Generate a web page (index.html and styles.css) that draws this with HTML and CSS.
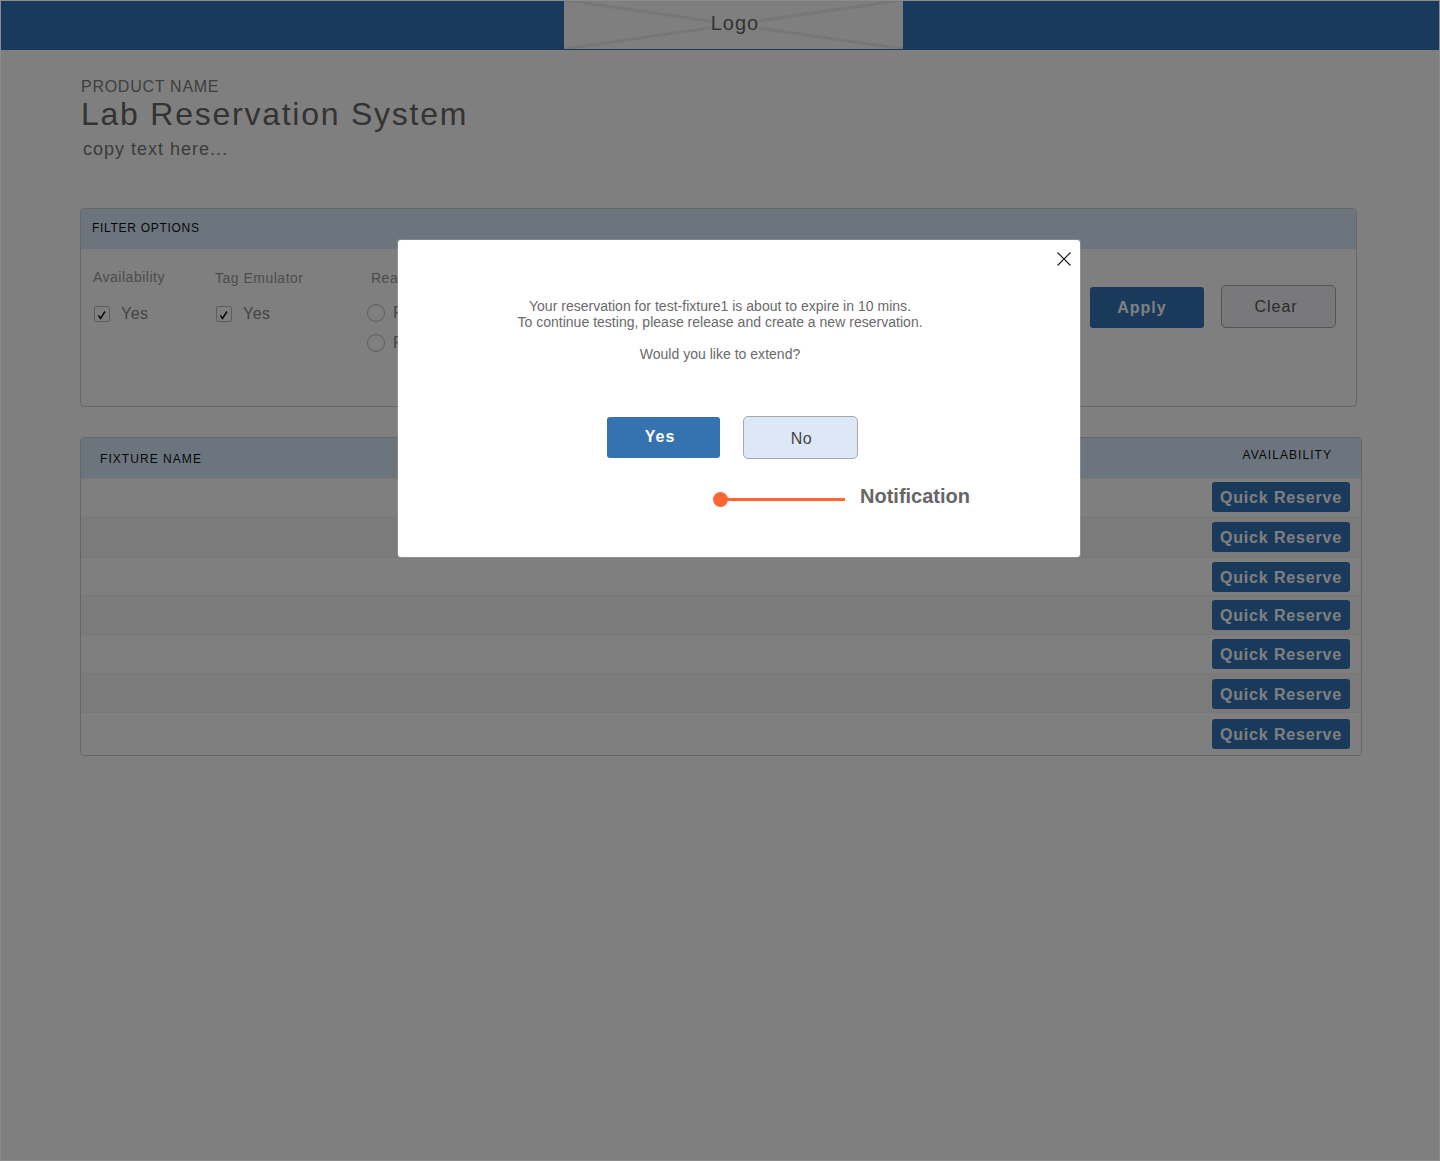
FILE: index.html
```html
<!DOCTYPE html>
<html lang="en">
<head>
<meta charset="utf-8">
<title>Lab Reservation System</title>
<link rel="stylesheet" href="styles.css">
</head>
<body>
<div class="page">
  <header class="topbar">
    <div class="logo">
      <svg class="logo-x" viewBox="0 0 339 49" preserveAspectRatio="none" aria-hidden="true">
        <path d="M0 0 L339 49 M339 0 L0 49" fill="none" stroke="#eee" stroke-width="3"/>
      </svg>
      <span class="logo-text">Logo</span>
    </div>
  </header>

  <section class="hero">
    <div class="hero-product">PRODUCT NAME</div>
    <h1 class="hero-title">Lab Reservation System</h1>
    <p class="hero-copy">copy text here...</p>
  </section>

  <section class="filter">
    <div class="filter-head">FILTER OPTIONS</div>
    <div class="filter-body">
      <div class="filter-col filter-col-a">
        <div class="filter-label">Availability</div>
        <label class="check"><span class="check-box"><svg viewBox="0 0 14 14" aria-hidden="true"><path d="M3.3 8.3 L5.5 11.5 L10 4.5" fill="none" stroke="#111" stroke-width="1.5"/></svg></span>Yes</label>
      </div>
      <div class="filter-col filter-col-b">
        <div class="filter-label filter-label-low">Tag Emulator</div>
        <label class="check"><span class="check-box"><svg viewBox="0 0 14 14" aria-hidden="true"><path d="M3.3 8.3 L5.5 11.5 L10 4.5" fill="none" stroke="#111" stroke-width="1.5"/></svg></span>Yes</label>
      </div>
      <div class="filter-col filter-col-c">
        <div class="filter-label filter-label-low filter-label-in">Rea</div>
        <div class="radio radio-first"><span class="radio-dot"></span>F</div>
        <div class="radio"><span class="radio-dot"></span>F</div>
      </div>
      <div class="filter-actions">
        <button class="btn btn-apply">Apply</button>
        <button class="btn btn-clear">Clear</button>
      </div>
    </div>
  </section>

  <section class="table">
    <div class="table-head">
      <span class="table-name">FIXTURE NAME</span>
      <span class="table-avail">AVAILABILITY</span>
    </div>
    <div class="row"><button class="quick">Quick Reserve</button></div>
    <div class="row"><button class="quick">Quick Reserve</button></div>
    <div class="row"><button class="quick">Quick Reserve</button></div>
    <div class="row"><button class="quick">Quick Reserve</button></div>
    <div class="row"><button class="quick">Quick Reserve</button></div>
    <div class="row"><button class="quick">Quick Reserve</button></div>
    <div class="row"><button class="quick">Quick Reserve</button></div>
  </section>

  <div class="overlay"></div>

  <div class="modal">
    <svg class="modal-close" viewBox="0 0 14 14" aria-hidden="true"><path d="M0.5 0.5 L13.5 13.5 M13.5 0.5 L0.5 13.5" fill="none" stroke="#222" stroke-width="1.2"/></svg>
    <div class="modal-text">
      <p>Your reservation for test-fixture1 is about to expire in 10 mins.<br>To continue testing, please release and create a new reservation.</p>
      <p>Would you like to extend?</p>
    </div>
    <div class="modal-actions">
      <button class="btn btn-yes">Yes</button>
      <button class="btn btn-no">No</button>
    </div>
    <div class="annot">
      <span class="annot-dot"></span>
      <span class="annot-line"></span>
      <span class="annot-text">Notification</span>
    </div>
  </div>
</div>
</body>
</html>
```
FILE: styles.css
```css
* { box-sizing: border-box; }
html, body { margin: 0; padding: 0; }
body { font-family: "Liberation Sans", Arial, sans-serif; background: #fff; color: #666; }

.page { position: relative; width: 1440px; height: 1161px; overflow: hidden; background: #fff; }

.topbar { height: 50px; background: #3574b8; padding-left: 564px; }
.logo { position: relative; width: 339px; height: 49px; background: #fff; display: flex; align-items: center; justify-content: center; }
.logo-x { position: absolute; inset: 0; width: 100%; height: 100%; }
.logo-text { position: relative; font-size: 20px; letter-spacing: 1px; color: #666; background: #fff; margin-top: -4px; margin-left: 3px; line-height: 20px; }

.hero { padding: 28px 0 0 81px; }
.hero-product { font-size: 16px; line-height: 18px; letter-spacing: 0.73px; color: #7f7f7f; }
.hero-title { margin: -1px 0 0; font-size: 32px; line-height: 38px; font-weight: 400; letter-spacing: 1.75px; color: #666; }
.hero-copy { margin: 6px 0 0 2px; font-size: 18px; line-height: 20px; letter-spacing: 1px; color: #777; }

.filter { margin: 49px 0 0 80px; width: 1277px; height: 199px; border: 1px solid #ccc; border-radius: 4px; overflow: hidden; }
.filter-head { height: 40px; background: #d8eafc; padding-left: 11px; font-size: 12px; line-height: 38px; letter-spacing: 0.7px; color: #111; }
.filter-body { display: flex; padding: 19px 20px 0 12px; }
.filter-col { display: flex; flex-direction: column; }
.filter-col-a { width: 122px; }
.filter-col-b { width: 152px; }
.filter-col-c { width: 100px; }
.filter-label { font-size: 14px; line-height: 18px; letter-spacing: 0.5px; color: #999; }
.filter-label-low { margin-top: 1px; }
.filter-label-in { margin-left: 4px; }
.check { display: flex; align-items: center; margin-top: 18px; font-size: 16px; line-height: 20px; letter-spacing: 0.5px; color: #888; }
.filter-label-low + .check { margin-top: 17px; }
.check-box { width: 16px; height: 16px; margin-right: 11px; margin-left: 1px; border: 1px solid #bbb; border-radius: 2px; display: block; }
.check-box svg { display: block; width: 14px; height: 14px; }
.radio { display: flex; align-items: center; height: 30px; font-size: 16px; color: #888; }
.radio-first { margin-top: 11px; }
.radio-dot { width: 18px; height: 18px; border: 1px solid #bbb; border-radius: 50%; margin-right: 8px; }
.filter-actions { margin-left: auto; display: flex; gap: 17px; align-items: flex-end; height: 60px; padding-top: 17px; }

.btn { font-family: inherit; padding: 0; cursor: pointer; }
.btn-apply { width: 114px; height: 41px; border: 0; border-radius: 3px; background: #3574b8; color: #fff; font-size: 16px; font-weight: 700; letter-spacing: 1px; padding-right: 10px; }
.btn-clear { width: 115px; height: 43px; border: 1px solid #a8a8a8; border-radius: 5px; background: #f2f3f6; color: #555; font-size: 16px; letter-spacing: 1px; padding-right: 5px; }

.table { margin: 30px 0 0 80px; width: 1282px; height: 319px; border: 1px solid #ccc; border-radius: 4px; overflow: hidden; }
.table-head { display: flex; justify-content: space-between; height: 40px; background: #d8eafc; font-size: 12px; letter-spacing: 1.05px; color: #111; }
.table-name { padding: 14px 0 0 19px; }
.table-avail { padding: 10px 29px 0 0; }
.row { display: flex; justify-content: flex-end; padding: 3px 11px 0 0; border-top: 1px solid #f0f0f0; background: #fff; height: 39px; }
.row:nth-child(odd) { background: #f7f7f7; }
.row:nth-child(3) { height: 40px; padding-top: 4px; }
.row:nth-child(4) { height: 38px; padding-top: 4px; }
.row:nth-child(5) { height: 39px; padding-top: 4px; }
.row:nth-child(6) { height: 39px; padding-top: 4px; }
.row:nth-child(7) { height: 39px; padding-top: 5px; }
.row:nth-child(8) { height: 43px; padding-top: 6px; }
.quick { width: 138px; height: 30px; padding: 1px 0 0; border: 0; border-radius: 3px; background: #3574b8; color: #fff; font-family: inherit; font-size: 16px; font-weight: 700; letter-spacing: 0.85px; }

.overlay { position: absolute; inset: 0; background: rgba(0, 0, 0, 0.5); border: 1px solid #8c8c8c; }

.modal { position: absolute; left: 398px; top: 240px; width: 682px; height: 317px; background: #fff; border-radius: 3px; box-shadow: 0 0 0 1px rgba(255, 255, 255, 0.15); }
.modal-close { position: absolute; left: 659px; top: 12px; width: 14px; height: 14px; display: block; }
.modal-text { padding-top: 58px; text-align: center; font-size: 14px; line-height: 16px; letter-spacing: 0.02px; color: #6a6a6a; width: 644px; }
.modal-text p { margin: 0 0 16px; }
.modal-actions { display: flex; align-items: center; gap: 23px; margin: 54px 0 0 209px; }
.btn-yes { width: 113px; height: 41px; border: 0; border-radius: 3px; background: #3572b0; color: #fff; font-size: 16px; font-weight: 700; letter-spacing: 1px; padding-right: 7px; padding-bottom: 1px; }
.btn-no { width: 115px; height: 43px; border: 1px solid #a8a8a8; border-radius: 5px; background: #dce8f6; color: #444; font-size: 16px; letter-spacing: 0.5px; padding: 2px 0 0 2px; }
.annot { display: flex; align-items: center; margin: 32px 0 0 315px; }
.annot-dot { width: 15px; height: 15px; border-radius: 50%; background: #ff6633; }
.annot-line { width: 118px; height: 3px; background: #ff6633; margin-left: -1px; }
.annot-text { margin: -7px 0 0 15px; font-size: 20px; line-height: 24px; font-weight: 700; color: #666; }
```
